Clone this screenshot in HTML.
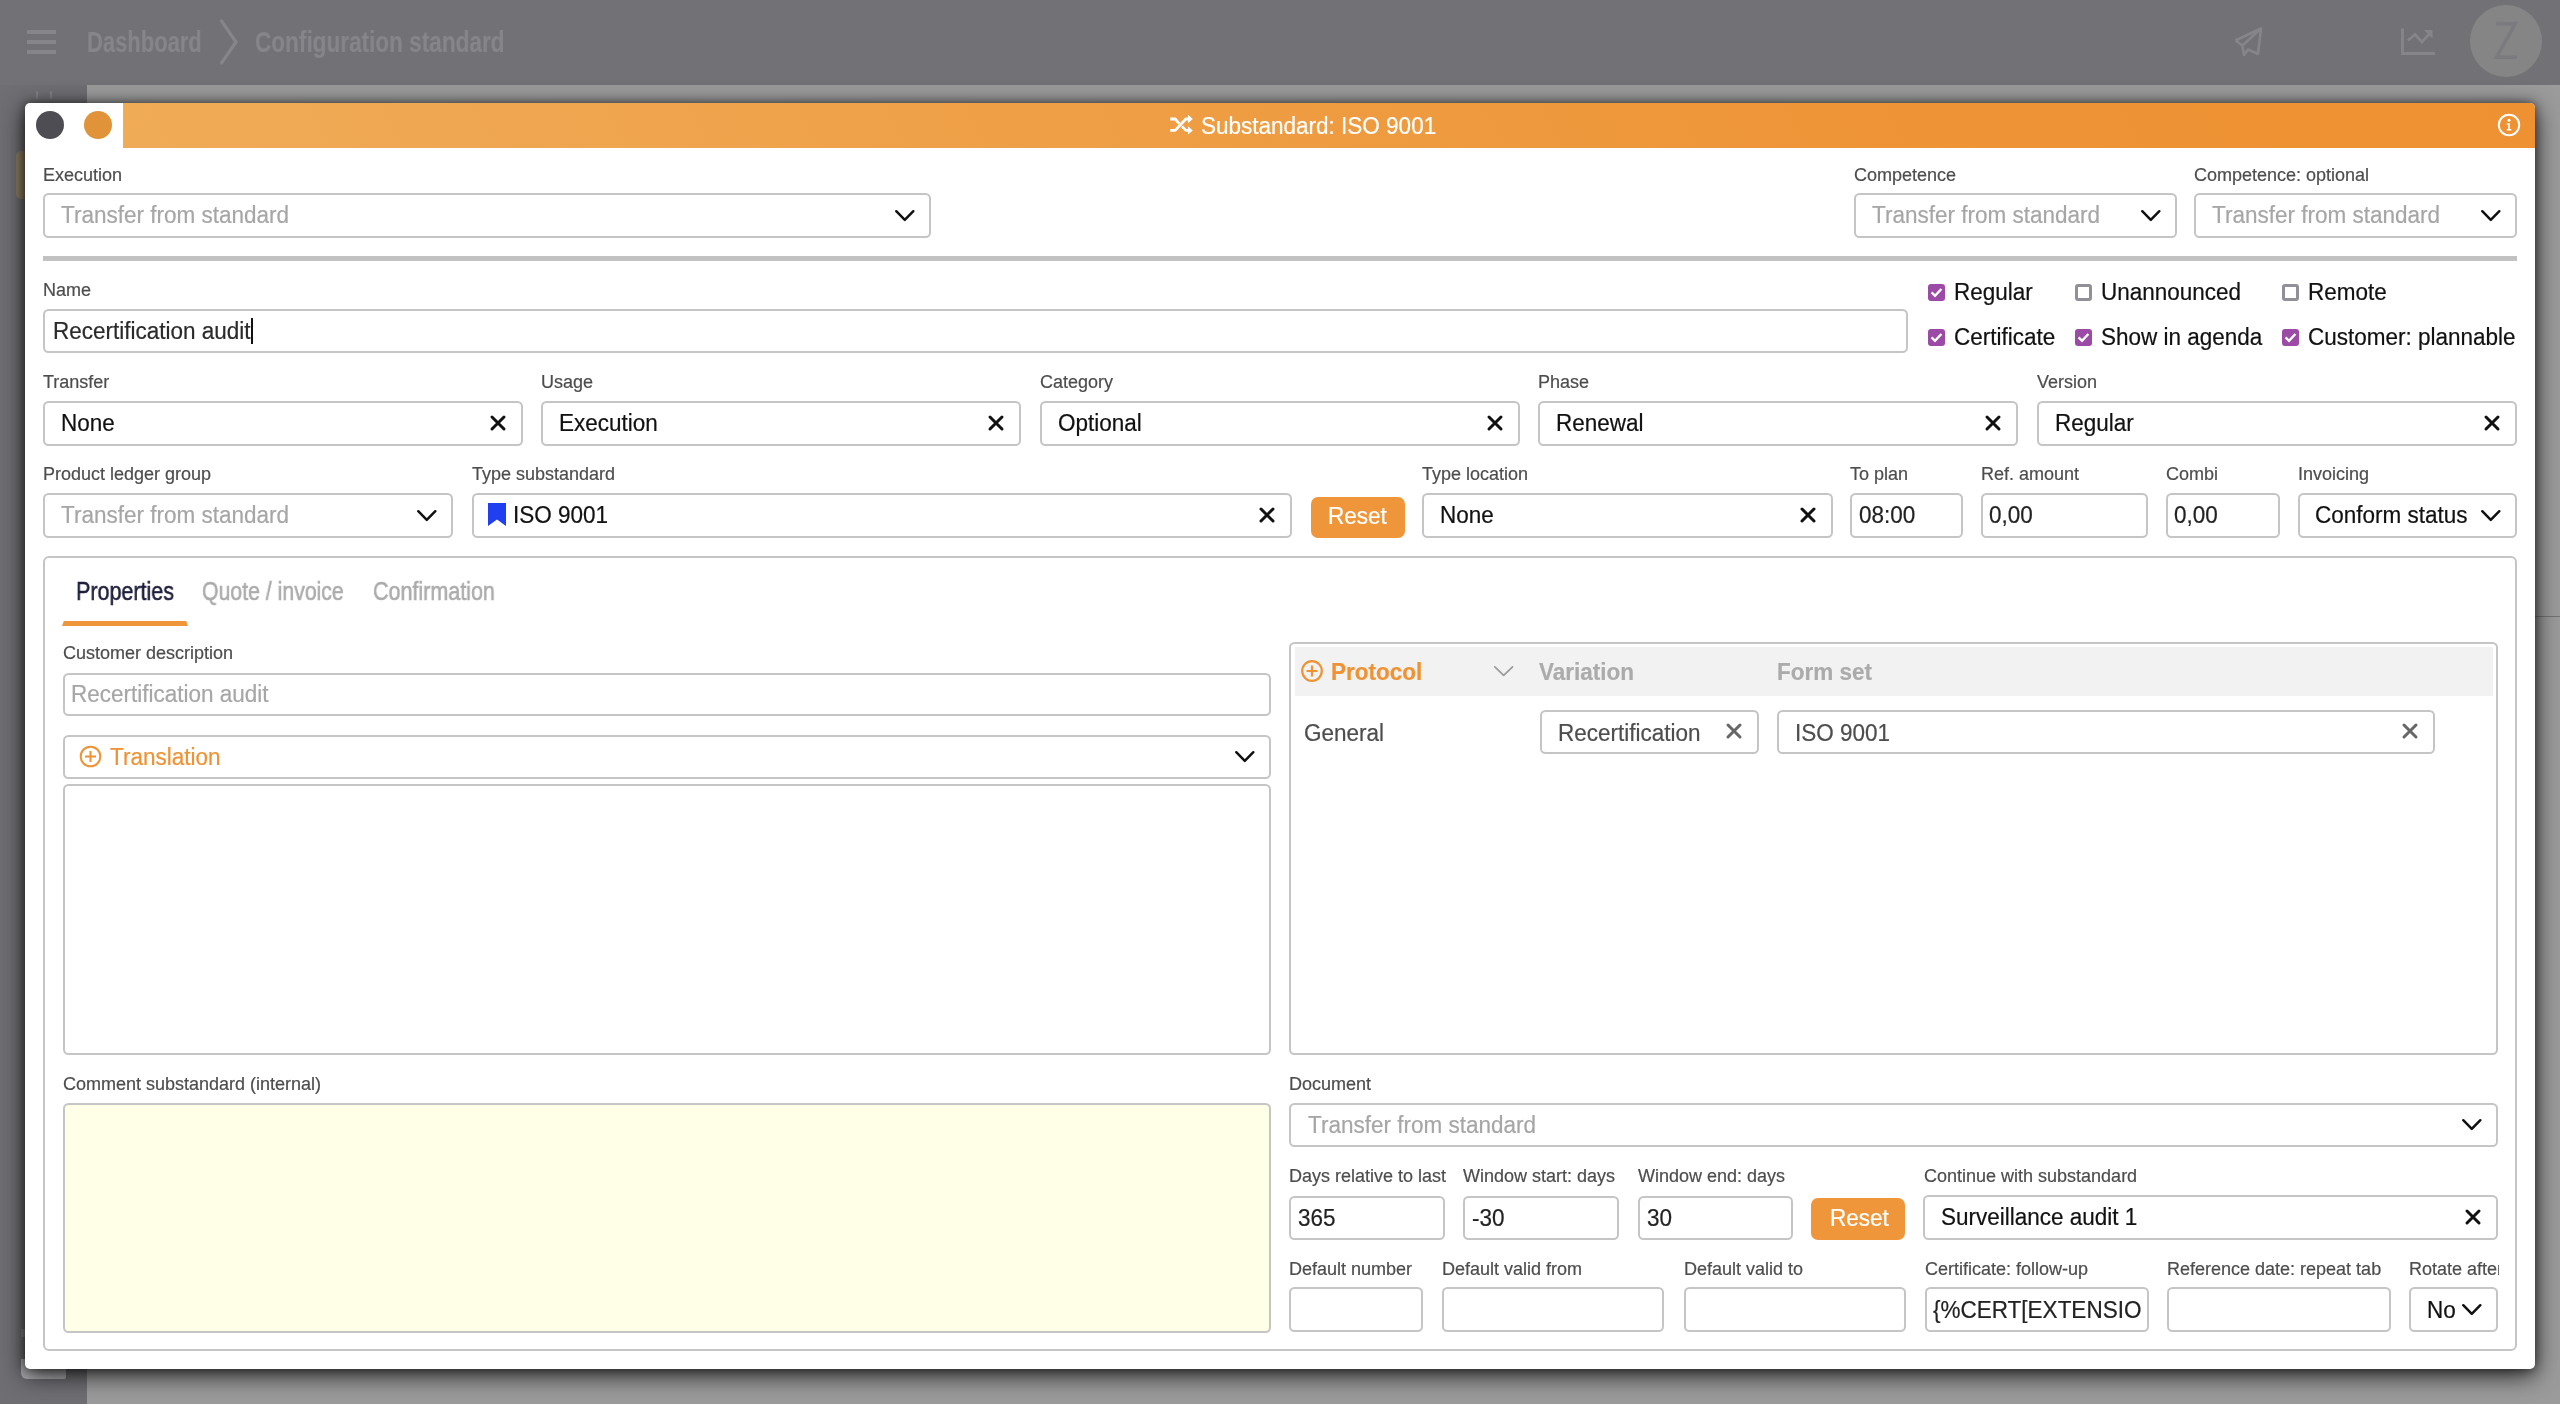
<!DOCTYPE html>
<html><head><meta charset="utf-8"><style>
html,body{margin:0;padding:0;width:2560px;height:1404px;overflow:hidden;}
body{position:relative;background:#9b9b9b;font-family:"Liberation Sans",sans-serif;}
.t{position:absolute;line-height:1;white-space:nowrap;will-change:transform;-webkit-text-stroke:0.2px currentColor;}
.b{position:absolute;box-sizing:border-box;}
</style></head><body>

<div class="b" style="left:0px;top:0px;width:2560px;height:85px;background:#727176;"></div>
<div class="b" style="left:0px;top:85px;width:87px;height:1319px;background:#6f6e73;"></div>
<div class="b" style="left:16px;top:151px;width:20px;height:48px;background:#8e7f62;border-radius:5px"></div>
<div class="b" style="left:21px;top:1359px;width:45px;height:20px;background:#b0afb4;border-radius:0 0 2px 6px"></div>
<div class="b" style="left:21px;top:1329px;width:8px;height:8px;background:#858489"></div>
<div class="b" style="left:36px;top:91px;width:2px;height:8px;background:#828186;border-radius:1px"></div>
<div class="b" style="left:50px;top:91px;width:2px;height:8px;background:#828186;border-radius:1px"></div>
<div class="b" style="left:27px;top:30px;width:29px;height:3.5px;background:#86858a;"></div>
<div class="b" style="left:27px;top:40px;width:29px;height:3.5px;background:#86858a;"></div>
<div class="b" style="left:27px;top:50px;width:29px;height:3.5px;background:#86858a;"></div>
<div class="t" style="left:86.5px;top:27.16px;font-size:29.5px;color:#86858a;font-weight:700;transform:scaleX(0.745);transform-origin:0 0;">Dashboard</div>
<svg class="b" style="left:219px;top:19px" width="20" height="46" viewBox="0 0 20 46"><path d="M2.5 2L17 23L2.5 44" stroke="#86858a" stroke-width="3.2" fill="none" stroke-linecap="round"/></svg>
<div class="t" style="left:255px;top:27.16px;font-size:29.5px;color:#86858a;font-weight:700;transform:scaleX(0.765);transform-origin:0 0;">Configuration standard</div>
<svg class="b" style="left:2232px;top:25px" width="34" height="34" viewBox="0 0 34 34"><path d="M3.5 15.5L29 3.5L26 29L16 24.5L12 30L10.5 20.5L29 3.5M10.5 20.5L3.5 15.5" stroke="#86858a" stroke-width="2.6" fill="none" stroke-linejoin="round"/></svg>
<svg class="b" style="left:2400px;top:27px" width="38" height="30" viewBox="0 0 38 30"><path d="M2.5 1.5V26.5H35" stroke="#86858a" stroke-width="2.8" fill="none"/><path d="M8 13.5L15 7.5L22 15L31 5" stroke="#86858a" stroke-width="2.8" fill="none"/><path d="M24 3H32.5V11.5Z" fill="#86858a"/></svg>
<div class="b" style="left:2470px;top:5px;width:72px;height:72px;border-radius:50%;background:#858585"></div>
<svg class="b" style="left:2490px;top:18px" width="34" height="44" viewBox="0 0 34 44"><path d="M6.3 5.6H25.2L6.6 39.2H27" stroke="#7b7a7f" stroke-width="3.6" fill="none" stroke-linejoin="miter"/></svg>
<div class="b" style="left:25px;top:103px;width:2510px;height:1266px;background:#fff;border-radius:5px;box-shadow:0 0 10px rgba(0,0,0,0.45),0 6px 24px rgba(0,0,0,0.8);"></div>
<div class="b" style="left:123px;top:103px;width:2412px;height:45px;background:linear-gradient(61deg,#f0ab57 0%,#efa24a 30%,#ee9538 70%,#ee9132 100%);border-top-right-radius:5px;"></div>
<div class="b" style="left:35.8px;top:111.2px;width:28px;height:28px;border-radius:50%;background:#4e4d53"></div>
<div class="b" style="left:84.3px;top:111.2px;width:28px;height:28px;border-radius:50%;background:#e09338"></div>
<svg class="b" style="left:1169px;top:114px" width="26" height="22" viewBox="0 0 26 22"><path d="M1.2 5H6.2L10.2 9.6M1.2 16.4H6.2L16.8 5H19.5M13 12.4L16.8 16.4H19.5" stroke="#fff" stroke-width="2.8" fill="none" stroke-linejoin="round"/><path d="M19 0.8L23.8 5L19 9.2ZM19 12.2L23.8 16.4L19 20.6Z" fill="#fff"/></svg>
<div class="t" style="left:1200.5px;top:115.88px;font-size:22.5px;color:#fff;font-weight:400;transform:scaleY(1.07);transform-origin:0 18px;">Substandard: ISO 9001</div>
<svg class="b" style="left:2497px;top:113px" width="24" height="24" viewBox="0 0 24 24"><circle cx="12" cy="12" r="10.2" stroke="#fff" stroke-width="2" fill="none"/><circle cx="12" cy="7.3" r="1.5" fill="#fff"/><path d="M9.8 10.2H12.8V16H14.3V17.6H9.8V16H11.2V11.8H9.8Z" fill="#fff"/></svg>
<div class="t" style="left:43px;top:165.66px;font-size:18px;color:#4d4d4d;font-weight:400;">Execution</div>
<div class="b" style="left:43px;top:193px;width:888px;height:45px;background:#fff;border:2px solid #c5c5c5;border-radius:5.5px;"></div>
<div class="t" style="left:61px;top:205.27px;font-size:22.5px;color:#a6a6a6;font-weight:400;transform:scaleY(1.07);transform-origin:0 18px;">Transfer from standard</div>
<svg class="b" style="left:893.3px;top:208.1px" width="23.6" height="15.7" viewBox="0 0 23.6 15.7"><path d="M3.25 3.25L11.8 11.9375L20.35 3.25" stroke="#111" stroke-width="2.5" fill="none" stroke-linecap="round" stroke-linejoin="round"/></svg>
<div class="t" style="left:1854px;top:165.66px;font-size:18px;color:#4d4d4d;font-weight:400;">Competence</div>
<div class="b" style="left:1854px;top:193px;width:323px;height:45px;background:#fff;border:2px solid #c5c5c5;border-radius:5.5px;"></div>
<div class="t" style="left:1872px;top:205.27px;font-size:22.5px;color:#a6a6a6;font-weight:400;transform:scaleY(1.07);transform-origin:0 18px;">Transfer from standard</div>
<svg class="b" style="left:2139.3px;top:208.1px" width="23.6" height="15.7" viewBox="0 0 23.6 15.7"><path d="M3.25 3.25L11.8 11.9375L20.35 3.25" stroke="#111" stroke-width="2.5" fill="none" stroke-linecap="round" stroke-linejoin="round"/></svg>
<div class="t" style="left:2194px;top:165.66px;font-size:18px;color:#4d4d4d;font-weight:400;">Competence: optional</div>
<div class="b" style="left:2194px;top:193px;width:323px;height:45px;background:#fff;border:2px solid #c5c5c5;border-radius:5.5px;"></div>
<div class="t" style="left:2212px;top:205.27px;font-size:22.5px;color:#a6a6a6;font-weight:400;transform:scaleY(1.07);transform-origin:0 18px;">Transfer from standard</div>
<svg class="b" style="left:2479.3px;top:208.1px" width="23.6" height="15.7" viewBox="0 0 23.6 15.7"><path d="M3.25 3.25L11.8 11.9375L20.35 3.25" stroke="#111" stroke-width="2.5" fill="none" stroke-linecap="round" stroke-linejoin="round"/></svg>
<div class="b" style="left:43px;top:256px;width:2474px;height:5px;background:#c2c2c2;"></div>
<div class="t" style="left:43px;top:280.66px;font-size:18px;color:#4d4d4d;font-weight:400;">Name</div>
<div class="b" style="left:43px;top:309px;width:1865px;height:44px;background:#fff;border:2px solid #c5c5c5;border-radius:5.5px;"></div>
<div class="t" style="left:52.5px;top:320.77px;font-size:22.5px;color:#2a2a2a;font-weight:400;transform:scaleY(1.07);transform-origin:0 18px;">Recertification audit</div>
<div class="b" style="left:251.25px;top:318px;width:2.0px;height:26px;background:#111;"></div>
<svg class="b" style="left:1928px;top:284px" width="17" height="17" viewBox="0 0 17 17"><rect x="0" y="0" width="17" height="17" rx="3" fill="#9b4aa6"/><path d="M3.6 8.4L7 11.8L13.4 5" stroke="#fff" stroke-width="2.4" fill="none"/></svg>
<div class="t" style="left:1954px;top:282.27px;font-size:22.5px;color:#111;font-weight:400;transform:scaleY(1.07);transform-origin:0 18px;">Regular</div>
<div class="b" style="left:2074.5px;top:284px;width:17px;height:17px;border:3px solid #918f98;border-radius:3px;background:#fff"></div>
<div class="t" style="left:2100.5px;top:282.27px;font-size:22.5px;color:#111;font-weight:400;transform:scaleY(1.07);transform-origin:0 18px;">Unannounced</div>
<div class="b" style="left:2282px;top:284px;width:17px;height:17px;border:3px solid #918f98;border-radius:3px;background:#fff"></div>
<div class="t" style="left:2308px;top:282.27px;font-size:22.5px;color:#111;font-weight:400;transform:scaleY(1.07);transform-origin:0 18px;">Remote</div>
<svg class="b" style="left:1928px;top:329px" width="17" height="17" viewBox="0 0 17 17"><rect x="0" y="0" width="17" height="17" rx="3" fill="#9b4aa6"/><path d="M3.6 8.4L7 11.8L13.4 5" stroke="#fff" stroke-width="2.4" fill="none"/></svg>
<div class="t" style="left:1954px;top:327.27px;font-size:22.5px;color:#111;font-weight:400;transform:scaleY(1.07);transform-origin:0 18px;">Certificate</div>
<svg class="b" style="left:2074.5px;top:329px" width="17" height="17" viewBox="0 0 17 17"><rect x="0" y="0" width="17" height="17" rx="3" fill="#9b4aa6"/><path d="M3.6 8.4L7 11.8L13.4 5" stroke="#fff" stroke-width="2.4" fill="none"/></svg>
<div class="t" style="left:2100.5px;top:327.27px;font-size:22.5px;color:#111;font-weight:400;transform:scaleY(1.07);transform-origin:0 18px;">Show in agenda</div>
<svg class="b" style="left:2282px;top:329px" width="17" height="17" viewBox="0 0 17 17"><rect x="0" y="0" width="17" height="17" rx="3" fill="#9b4aa6"/><path d="M3.6 8.4L7 11.8L13.4 5" stroke="#fff" stroke-width="2.4" fill="none"/></svg>
<div class="t" style="left:2308px;top:327.27px;font-size:22.5px;color:#111;font-weight:400;transform:scaleY(1.07);transform-origin:0 18px;">Customer: plannable</div>
<div class="t" style="left:43px;top:372.66px;font-size:18px;color:#4d4d4d;font-weight:400;">Transfer</div>
<div class="b" style="left:43px;top:401px;width:480px;height:45px;background:#fff;border:2px solid #c5c5c5;border-radius:5.5px;"></div>
<div class="t" style="left:61px;top:413.27px;font-size:22.5px;color:#111;font-weight:400;transform:scaleY(1.07);transform-origin:0 18px;">None</div>
<svg class="b" style="left:489.0px;top:413.5px" width="18" height="18" viewBox="0 0 18 18"><path d="M3.0 3.0L15.0 15.0M15.0 3.0L3.0 15.0" stroke="#111" stroke-width="3" stroke-linecap="round" fill="none"/></svg>
<div class="t" style="left:541px;top:372.66px;font-size:18px;color:#4d4d4d;font-weight:400;">Usage</div>
<div class="b" style="left:541px;top:401px;width:480px;height:45px;background:#fff;border:2px solid #c5c5c5;border-radius:5.5px;"></div>
<div class="t" style="left:559px;top:413.27px;font-size:22.5px;color:#111;font-weight:400;transform:scaleY(1.07);transform-origin:0 18px;">Execution</div>
<svg class="b" style="left:987.0px;top:413.5px" width="18" height="18" viewBox="0 0 18 18"><path d="M3.0 3.0L15.0 15.0M15.0 3.0L3.0 15.0" stroke="#111" stroke-width="3" stroke-linecap="round" fill="none"/></svg>
<div class="t" style="left:1040px;top:372.66px;font-size:18px;color:#4d4d4d;font-weight:400;">Category</div>
<div class="b" style="left:1040px;top:401px;width:480px;height:45px;background:#fff;border:2px solid #c5c5c5;border-radius:5.5px;"></div>
<div class="t" style="left:1058px;top:413.27px;font-size:22.5px;color:#111;font-weight:400;transform:scaleY(1.07);transform-origin:0 18px;">Optional</div>
<svg class="b" style="left:1486.0px;top:413.5px" width="18" height="18" viewBox="0 0 18 18"><path d="M3.0 3.0L15.0 15.0M15.0 3.0L3.0 15.0" stroke="#111" stroke-width="3" stroke-linecap="round" fill="none"/></svg>
<div class="t" style="left:1538px;top:372.66px;font-size:18px;color:#4d4d4d;font-weight:400;">Phase</div>
<div class="b" style="left:1538px;top:401px;width:480px;height:45px;background:#fff;border:2px solid #c5c5c5;border-radius:5.5px;"></div>
<div class="t" style="left:1556px;top:413.27px;font-size:22.5px;color:#111;font-weight:400;transform:scaleY(1.07);transform-origin:0 18px;">Renewal</div>
<svg class="b" style="left:1984.0px;top:413.5px" width="18" height="18" viewBox="0 0 18 18"><path d="M3.0 3.0L15.0 15.0M15.0 3.0L3.0 15.0" stroke="#111" stroke-width="3" stroke-linecap="round" fill="none"/></svg>
<div class="t" style="left:2036.5px;top:372.66px;font-size:18px;color:#4d4d4d;font-weight:400;">Version</div>
<div class="b" style="left:2036.5px;top:401px;width:480.5px;height:45px;background:#fff;border:2px solid #c5c5c5;border-radius:5.5px;"></div>
<div class="t" style="left:2054.5px;top:413.27px;font-size:22.5px;color:#111;font-weight:400;transform:scaleY(1.07);transform-origin:0 18px;">Regular</div>
<svg class="b" style="left:2483.0px;top:413.5px" width="18" height="18" viewBox="0 0 18 18"><path d="M3.0 3.0L15.0 15.0M15.0 3.0L3.0 15.0" stroke="#111" stroke-width="3" stroke-linecap="round" fill="none"/></svg>
<div class="t" style="left:43px;top:464.66px;font-size:18px;color:#4d4d4d;font-weight:400;">Product ledger group</div>
<div class="b" style="left:43px;top:493px;width:410px;height:45px;background:#fff;border:2px solid #c5c5c5;border-radius:5.5px;"></div>
<div class="t" style="left:61px;top:505.27px;font-size:22.5px;color:#a6a6a6;font-weight:400;transform:scaleY(1.07);transform-origin:0 18px;">Transfer from standard</div>
<svg class="b" style="left:415.3px;top:508.1px" width="23.6" height="15.7" viewBox="0 0 23.6 15.7"><path d="M3.25 3.25L11.8 11.9375L20.35 3.25" stroke="#111" stroke-width="2.5" fill="none" stroke-linecap="round" stroke-linejoin="round"/></svg>
<div class="t" style="left:471.5px;top:464.66px;font-size:18px;color:#4d4d4d;font-weight:400;">Type substandard</div>
<div class="b" style="left:471.5px;top:493px;width:820.5px;height:45px;background:#fff;border:2px solid #c5c5c5;border-radius:5.5px;"></div>
<div class="t" style="left:513px;top:505.27px;font-size:22.5px;color:#111;font-weight:400;transform:scaleY(1.07);transform-origin:0 18px;">ISO 9001</div>
<svg class="b" style="left:1258.0px;top:505.5px" width="18" height="18" viewBox="0 0 18 18"><path d="M3.0 3.0L15.0 15.0M15.0 3.0L3.0 15.0" stroke="#111" stroke-width="3" stroke-linecap="round" fill="none"/></svg>
<svg class="b" style="left:488px;top:503px" width="18" height="23" viewBox="0 0 18 23"><path d="M0 0H18V23L9 16.5L0 23Z" fill="#1f3ff0"/></svg>
<div class="b" style="left:1310.5px;top:496.5px;width:94px;height:41px;background:#f0963a;border-radius:7px"></div>
<div class="t" style="left:1328px;top:506.07px;font-size:22.5px;color:#fff;font-weight:400;transform:scaleY(1.07);transform-origin:0 18px;">Reset</div>
<div class="t" style="left:1422px;top:464.66px;font-size:18px;color:#4d4d4d;font-weight:400;">Type location</div>
<div class="b" style="left:1422px;top:493px;width:411px;height:45px;background:#fff;border:2px solid #c5c5c5;border-radius:5.5px;"></div>
<div class="t" style="left:1440px;top:505.27px;font-size:22.5px;color:#111;font-weight:400;transform:scaleY(1.07);transform-origin:0 18px;">None</div>
<svg class="b" style="left:1799.0px;top:505.5px" width="18" height="18" viewBox="0 0 18 18"><path d="M3.0 3.0L15.0 15.0M15.0 3.0L3.0 15.0" stroke="#111" stroke-width="3" stroke-linecap="round" fill="none"/></svg>
<div class="t" style="left:1850px;top:464.66px;font-size:18px;color:#4d4d4d;font-weight:400;">To plan</div>
<div class="b" style="left:1850px;top:493px;width:113px;height:45px;background:#fff;border:2px solid #c5c5c5;border-radius:5.5px;"></div>
<div class="t" style="left:1858.5px;top:505.27px;font-size:22.5px;color:#222;font-weight:400;transform:scaleY(1.07);transform-origin:0 18px;">08:00</div>
<div class="t" style="left:1981px;top:464.66px;font-size:18px;color:#4d4d4d;font-weight:400;">Ref. amount</div>
<div class="b" style="left:1981px;top:493px;width:167px;height:45px;background:#fff;border:2px solid #c5c5c5;border-radius:5.5px;"></div>
<div class="t" style="left:1989px;top:505.27px;font-size:22.5px;color:#222;font-weight:400;transform:scaleY(1.07);transform-origin:0 18px;">0,00</div>
<div class="t" style="left:2166px;top:464.66px;font-size:18px;color:#4d4d4d;font-weight:400;">Combi</div>
<div class="b" style="left:2166px;top:493px;width:114px;height:45px;background:#fff;border:2px solid #c5c5c5;border-radius:5.5px;"></div>
<div class="t" style="left:2174px;top:505.27px;font-size:22.5px;color:#222;font-weight:400;transform:scaleY(1.07);transform-origin:0 18px;">0,00</div>
<div class="t" style="left:2298px;top:464.66px;font-size:18px;color:#4d4d4d;font-weight:400;">Invoicing</div>
<div class="b" style="left:2298px;top:493px;width:219px;height:45px;background:#fff;border:2px solid #c5c5c5;border-radius:5.5px;"></div>
<div class="t" style="left:2315px;top:505.27px;font-size:22.5px;color:#111;font-weight:400;transform:scaleY(1.07);transform-origin:0 18px;">Conform status</div>
<svg class="b" style="left:2479.3px;top:508.1px" width="23.6" height="15.7" viewBox="0 0 23.6 15.7"><path d="M3.25 3.25L11.8 11.9375L20.35 3.25" stroke="#111" stroke-width="2.5" fill="none" stroke-linecap="round" stroke-linejoin="round"/></svg>
<div class="b" style="left:43px;top:556px;width:2474px;height:795px;background:#fff;border:2px solid #c5c5c5;border-radius:6px;"></div>
<div class="t" style="left:76px;top:579.25px;font-size:25px;color:#1e1e3c;font-weight:400;transform:scaleX(0.86) scaleY(1.0);transform-origin:0 0;-webkit-text-stroke:0.5px #1e1e3c;">Properties</div>
<div class="t" style="left:202px;top:579.25px;font-size:25px;color:#ababab;font-weight:400;transform:scaleX(0.85);transform-origin:0 0;-webkit-text-stroke:0.6px #adadad;">Quote / invoice</div>
<div class="t" style="left:372.5px;top:579.25px;font-size:25px;color:#ababab;font-weight:400;transform:scaleX(0.86);transform-origin:0 0;-webkit-text-stroke:0.6px #adadad;">Confirmation</div>
<div class="b" style="left:62px;top:621px;width:126px;height:5px;background:#f0963a;clip-path:polygon(1.8px 0,124.2px 0,126px 5px,0 5px)"></div>
<div class="t" style="left:62.5px;top:643.66px;font-size:18px;color:#4d4d4d;font-weight:400;">Customer description</div>
<div class="b" style="left:62.5px;top:672.5px;width:1208.5px;height:43.5px;background:#fff;border:2px solid #c5c5c5;border-radius:5.5px;"></div>
<div class="t" style="left:71px;top:684.03px;font-size:22.5px;color:#a6a6a6;font-weight:400;transform:scaleY(1.07);transform-origin:0 18px;">Recertification audit</div>
<div class="b" style="left:62.5px;top:735px;width:1208.5px;height:44px;background:#fff;border:2px solid #c5c5c5;border-radius:5.5px;"></div>
<svg class="b" style="left:79px;top:745px" width="23" height="23" viewBox="0 0 23 23"><circle cx="11.5" cy="11.5" r="9.8" stroke="#ee9233" stroke-width="2" fill="none"/><path d="M11.5 6V17M6 11.5H17" stroke="#ee9233" stroke-width="2" fill="none"/></svg>
<div class="t" style="left:110px;top:746.58px;font-size:22.5px;color:#ee9233;font-weight:400;transform:scaleY(1.07);transform-origin:0 18px;">Translation</div>
<svg class="b" style="left:1233.3px;top:749px" width="23.6" height="15.7" viewBox="0 0 23.6 15.7"><path d="M3.25 3.25L11.8 11.9375L20.35 3.25" stroke="#111" stroke-width="2.5" fill="none" stroke-linecap="round" stroke-linejoin="round"/></svg>
<div class="b" style="left:62.5px;top:784px;width:1208.5px;height:270.5px;background:#fff;border:2px solid #c5c5c5;border-radius:5.5px;"></div>
<div class="t" style="left:62.5px;top:1074.66px;font-size:18px;color:#4d4d4d;font-weight:400;">Comment substandard (internal)</div>
<div class="b" style="left:62.5px;top:1102.5px;width:1208.7px;height:230.0px;background:#fffee6;border:2px solid #c5c5c5;border-radius:5.5px;"></div>
<div class="b" style="left:1289px;top:642px;width:1209px;height:412.5px;background:#fff;border:2px solid #c5c5c5;border-radius:5.5px;"></div>
<div class="b" style="left:1294.5px;top:647px;width:1198.0px;height:48.5px;background:#f2f2f2;"></div>
<svg class="b" style="left:1300px;top:659px" width="24" height="24" viewBox="0 0 24 24"><circle cx="12" cy="12" r="9.8" stroke="#ee9233" stroke-width="2.2" fill="none"/><path d="M12 6.5V17.5M6.5 12H17.5" stroke="#ee9233" stroke-width="2.2" fill="none"/></svg>
<div class="t" style="left:1331px;top:661.58px;font-size:22.5px;color:#ee9233;font-weight:700;transform:scaleY(1.07);transform-origin:0 18px;">Protocol</div>
<svg class="b" style="left:1492.3px;top:664.2px" width="23.4" height="14.6" viewBox="0 0 23.4 14.6"><path d="M2.85 2.85L11.7 11.4015L20.549999999999997 2.85" stroke="#9a9a9a" stroke-width="1.7" fill="none" stroke-linecap="round" stroke-linejoin="round"/></svg>
<div class="t" style="left:1539px;top:661.58px;font-size:22.5px;color:#ababab;font-weight:700;transform:scaleY(1.07);transform-origin:0 18px;">Variation</div>
<div class="t" style="left:1776.5px;top:661.58px;font-size:22.5px;color:#ababab;font-weight:700;transform:scaleY(1.07);transform-origin:0 18px;">Form set</div>
<div class="t" style="left:1303.5px;top:722.58px;font-size:22.5px;color:#4d4d4d;font-weight:400;transform:scaleY(1.07);transform-origin:0 18px;">General</div>
<div class="b" style="left:1540px;top:709.7px;width:218.5px;height:44.799999999999955px;background:#fff;border:2px solid #c5c5c5;border-radius:5.5px;"></div>
<div class="t" style="left:1558px;top:722.88px;font-size:22.5px;color:#4d4d4d;font-weight:400;transform:scaleY(1.07);transform-origin:0 18px;">Recertification</div>
<svg class="b" style="left:1724.5px;top:722.1px" width="18" height="18" viewBox="0 0 18 18"><path d="M3.0 3.0L15.0 15.0M15.0 3.0L3.0 15.0" stroke="#666" stroke-width="3" stroke-linecap="round" fill="none"/></svg>
<div class="b" style="left:1777px;top:709.7px;width:658px;height:44.799999999999955px;background:#fff;border:2px solid #c5c5c5;border-radius:5.5px;"></div>
<div class="t" style="left:1794.5px;top:722.88px;font-size:22.5px;color:#4d4d4d;font-weight:400;transform:scaleY(1.07);transform-origin:0 18px;">ISO 9001</div>
<svg class="b" style="left:2401.0px;top:722.1px" width="18" height="18" viewBox="0 0 18 18"><path d="M3.0 3.0L15.0 15.0M15.0 3.0L3.0 15.0" stroke="#666" stroke-width="3" stroke-linecap="round" fill="none"/></svg>
<div class="t" style="left:1289px;top:1075.16px;font-size:18px;color:#4d4d4d;font-weight:400;">Document</div>
<div class="b" style="left:1289px;top:1102.5px;width:1209px;height:44.5px;background:#fff;border:2px solid #c5c5c5;border-radius:5.5px;"></div>
<div class="t" style="left:1308px;top:1114.53px;font-size:22.5px;color:#a6a6a6;font-weight:400;transform:scaleY(1.07);transform-origin:0 18px;">Transfer from standard</div>
<svg class="b" style="left:2460.3px;top:1117.35px" width="23.6" height="15.7" viewBox="0 0 23.6 15.7"><path d="M3.25 3.25L11.8 11.9375L20.35 3.25" stroke="#111" stroke-width="2.5" fill="none" stroke-linecap="round" stroke-linejoin="round"/></svg>
<div class="t" style="left:1289px;top:1167.16px;font-size:18px;color:#4d4d4d;font-weight:400;">Days relative to last</div>
<div class="t" style="left:1463px;top:1167.16px;font-size:18px;color:#4d4d4d;font-weight:400;">Window start: days</div>
<div class="t" style="left:1638px;top:1167.16px;font-size:18px;color:#4d4d4d;font-weight:400;">Window end: days</div>
<div class="t" style="left:1923.5px;top:1167.16px;font-size:18px;color:#4d4d4d;font-weight:400;">Continue with substandard</div>
<div class="b" style="left:1289px;top:1195.5px;width:156px;height:44.5px;background:#fff;border:2px solid #c5c5c5;border-radius:5.5px;"></div>
<div class="t" style="left:1298px;top:1207.53px;font-size:22.5px;color:#222;font-weight:400;transform:scaleY(1.07);transform-origin:0 18px;">365</div>
<div class="b" style="left:1463px;top:1195.5px;width:156px;height:44.5px;background:#fff;border:2px solid #c5c5c5;border-radius:5.5px;"></div>
<div class="t" style="left:1472px;top:1207.53px;font-size:22.5px;color:#222;font-weight:400;transform:scaleY(1.07);transform-origin:0 18px;">-30</div>
<div class="b" style="left:1637.5px;top:1195.5px;width:155.5px;height:44.5px;background:#fff;border:2px solid #c5c5c5;border-radius:5.5px;"></div>
<div class="t" style="left:1646.5px;top:1207.53px;font-size:22.5px;color:#222;font-weight:400;transform:scaleY(1.07);transform-origin:0 18px;">30</div>
<div class="b" style="left:1811px;top:1198px;width:94px;height:42px;background:#f0963a;border-radius:7px"></div>
<div class="t" style="left:1829.5px;top:1208.08px;font-size:22.5px;color:#fff;font-weight:400;transform:scaleY(1.07);transform-origin:0 18px;">Reset</div>
<div class="b" style="left:1922.5px;top:1195px;width:575.5px;height:45px;background:#fff;border:2px solid #c5c5c5;border-radius:5.5px;"></div>
<div class="t" style="left:1941px;top:1207.28px;font-size:22.5px;color:#111;font-weight:400;transform:scaleY(1.07);transform-origin:0 18px;">Surveillance audit 1</div>
<svg class="b" style="left:2464.0px;top:1207.5px" width="18" height="18" viewBox="0 0 18 18"><path d="M3.0 3.0L15.0 15.0M15.0 3.0L3.0 15.0" stroke="#111" stroke-width="3" stroke-linecap="round" fill="none"/></svg>
<div class="t" style="left:1289px;top:1260.16px;font-size:18px;color:#4d4d4d;font-weight:400;">Default number</div>
<div class="t" style="left:1441.5px;top:1260.16px;font-size:18px;color:#4d4d4d;font-weight:400;">Default valid from</div>
<div class="t" style="left:1683.5px;top:1260.16px;font-size:18px;color:#4d4d4d;font-weight:400;">Default valid to</div>
<div class="t" style="left:1925px;top:1260.16px;font-size:18px;color:#4d4d4d;font-weight:400;">Certificate: follow-up</div>
<div class="t" style="left:2167px;top:1260.16px;font-size:18px;color:#4d4d4d;font-weight:400;">Reference date: repeat tab</div>
<div class="b" style="left:2409px;top:1250px;width:89.5px;height:30px;overflow:hidden"><div class="t" style="left:0;top:10.16px;font-size:18px;color:#4d4d4d">Rotate after</div></div>
<div class="b" style="left:1289px;top:1287.3px;width:134px;height:45.0px;background:#fff;border:2px solid #c5c5c5;border-radius:5.5px;"></div>
<div class="b" style="left:1441.5px;top:1287.3px;width:222.5px;height:45.0px;background:#fff;border:2px solid #c5c5c5;border-radius:5.5px;"></div>
<div class="b" style="left:1683.5px;top:1287.3px;width:222.5px;height:45.0px;background:#fff;border:2px solid #c5c5c5;border-radius:5.5px;"></div>
<div class="b" style="left:1925px;top:1287.3px;width:223.5px;height:45.0px;background:#fff;border:2px solid #c5c5c5;border-radius:5.5px;"></div>
<div class="b" style="left:1927px;top:1289.3px;width:214.0px;height:41.0px;overflow:hidden"><div class="t" style="left:6px;top:10.28px;font-size:22.5px;color:#222;transform:scaleY(1.07);transform-origin:0 18px">{%CERT[EXTENSION]%}</div></div>
<div class="b" style="left:2167px;top:1287.3px;width:223.5px;height:45.0px;background:#fff;border:2px solid #c5c5c5;border-radius:5.5px;"></div>
<div class="b" style="left:2408.5px;top:1287.3px;width:89.5px;height:45.0px;background:#fff;border:2px solid #c5c5c5;border-radius:5.5px;"></div>
<div class="t" style="left:2427px;top:1299.58px;font-size:22.5px;color:#111;font-weight:400;transform:scaleY(1.07);transform-origin:0 18px;">No</div>
<svg class="b" style="left:2460.3px;top:1302.3999999999999px" width="23.6" height="15.7" viewBox="0 0 23.6 15.7"><path d="M3.25 3.25L11.8 11.9375L20.35 3.25" stroke="#111" stroke-width="2.5" fill="none" stroke-linecap="round" stroke-linejoin="round"/></svg>
<div class="b" style="left:2535px;top:616px;width:25px;height:1px;background:rgba(0,0,0,0.25);"></div>
</body></html>
